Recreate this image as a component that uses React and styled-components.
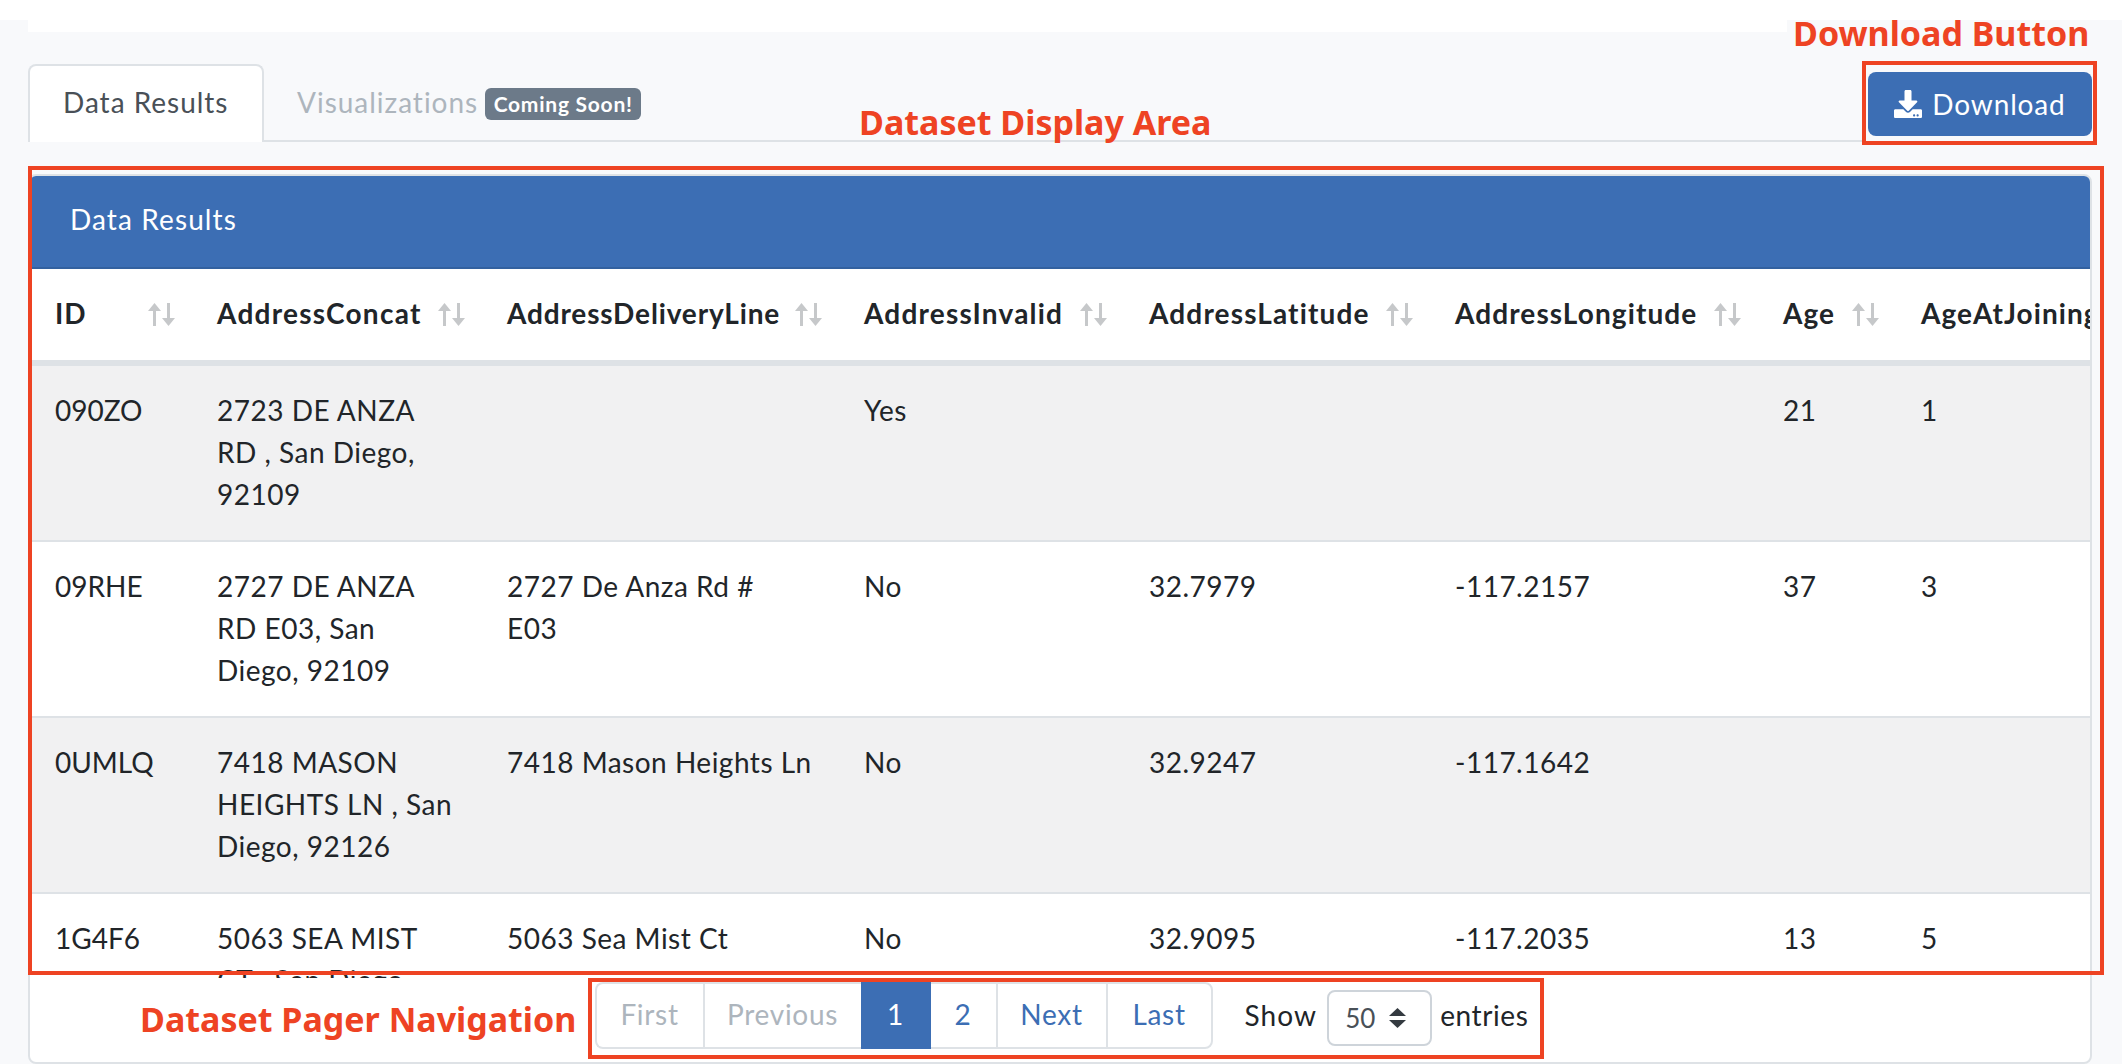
import React from "react";
import styled, { createGlobalStyle } from "styled-components";
import { FaDownload } from "react-icons/fa";

const BLUE = "#3c6eb4";
const RED = "#ee4323";
const LINE = "#dee2e6";

const Global = createGlobalStyle`
  html, body { margin: 0; padding: 0; background: #f8f9fb; }
  * { box-sizing: border-box; }
`;
const Page = styled.div`
  position: relative;
  width: 2122px;
  height: 1064px;
  overflow: hidden;
  background: #f8f9fb;
  color: #212529;
  font-family: "Lato", "Liberation Sans", sans-serif;
  font-size: 28px;
  line-height: 42px;
`;
const TopBand = styled.div`
  display: flex;
  align-items: flex-start;
  height: 32px;
`;
const TopPiece = styled.div`
  flex: ${(p) => (p.$grow ? "1" : `0 0 ${p.$w}px`)};
  height: ${(p) => p.$h}px;
  background: #fff;
`;
const TabRow = styled.div`
  display: flex;
  align-items: flex-end;
  height: 110px;
  padding: 0 30px 0 28px;
`;
const Tabs = styled.div`
  flex: 1;
  display: flex;
  align-items: flex-end;
  height: 78px;
  border-bottom: 2px solid ${LINE};
`;
const Tab = styled.div`
  display: flex;
  align-items: center;
  height: 78px;
  margin-bottom: -2px;
  padding: 0 0 5px ${(p) => (p.$active ? 33 : 31)}px;
  background: ${(p) => (p.$active ? "#fff" : "transparent")};
  border: 2px solid ${(p) => (p.$active ? LINE : "transparent")};
  border-bottom: 0;
  border-radius: 8px 8px 0 0;
  color: ${(p) => (p.$active ? "#495057" : "#adb5bd")};
  letter-spacing: 0.98px;
  white-space: nowrap;
  width: ${(p) => (p.$active ? "236px" : "auto")};
`;
const Badge = styled.span`
  display: inline-flex;
  align-items: center;
  justify-content: center;
  width: 156px;
  height: 32px;
  margin: 5px 0 0 7px;
  background: #6c7a89;
  border-radius: 6px;
  color: #fff;
  font-size: 21px;
  font-weight: 700;
  letter-spacing: 0.75px;
`;
const DownloadButton = styled.button`
  display: flex;
  align-items: center;
  justify-content: center;
  gap: 10px;
  width: 224px;
  height: 64px;
  margin: 0 0 6px 6px;
  padding: 0;
  background: ${BLUE};
  border: 0;
  border-radius: 8px;
  color: #fff;
  font: inherit;
  letter-spacing: 0.85px;
`;
const Card = styled.section`
  display: flex;
  flex-direction: column;
  height: 890px;
  margin: 32px 30px 0 28px;
  background: #fff;
  border: 2px solid ${LINE};
  border-radius: 8px;
  overflow: hidden;
`;
const CardHeader = styled.header`
  display: flex;
  align-items: center;
  flex: 0 0 93px;
  padding: 0 0 5px 40px;
  background: ${BLUE};
  border-bottom: 2px solid #33619f;
  color: #fff;
  letter-spacing: 1.1px;
`;
const TableClip = styled.div`
  flex: 0 0 709px;
  overflow: hidden;
`;
const Table = styled.table`
  width: 2300px;
  table-layout: fixed;
  border-collapse: separate;
  border-spacing: 0;
`;
const Th = styled.th`
  height: 97px;
  padding: 0 19px 3px ${(p) => (p.$first ? 25 : 23)}px;
  border-bottom: 6px solid ${LINE};
  text-align: left;
  font-weight: 700;
  white-space: nowrap;
  letter-spacing: ${(p) => p.$sp}px;
  color: #212529;
`;
const ThInner = styled.div`
  display: flex;
  align-items: center;
  justify-content: space-between;
`;
const SortWrap = styled.span`
  display: flex;
  margin-top: 2px;
`;
const Tr = styled.tr`
  background: ${(p) => (p.$odd ? "#f1f1f2" : "#fff")};
`;
const Td = styled.td`
  height: 176px;
  padding: 23px 0 25px ${(p) => (p.$first ? 25 : 23)}px;
  border-bottom: 2px solid ${LINE};
  vertical-align: top;
  white-space: pre;
  letter-spacing: ${(p) => (p.$first ? 0 : 0.5)}px;
`;
const Footer = styled.footer`
  display: flex;
  justify-content: center;
  align-items: flex-start;
  padding: 4px 0 0 2px;
`;
const Pagination = styled.nav`
  display: flex;
  height: 67px;
  margin-left: 1px;
`;
const PageItem = styled.a`
  display: flex;
  align-items: center;
  justify-content: center;
  width: ${(p) => p.$w}px;
  padding-bottom: 3px;
  border-style: solid;
  border-color: ${(p) => (p.$active ? BLUE : LINE)};
  border-width: 2px ${(p) => (p.$end ? 2 : 0)}px 2px ${(p) => (p.$flush ? 0 : 2)}px;
  border-radius: ${(p) => (p.$first ? "8px 0 0 8px" : p.$end ? "0 8px 8px 0" : "0")};
  background: ${(p) => (p.$active ? BLUE : "#fff")};
  color: ${(p) => (p.$active ? "#fff" : p.$off ? "#adb5bd" : BLUE)};
  letter-spacing: 0.7px;
`;
const Entries = styled.div`
  display: flex;
  align-items: center;
  gap: 8px;
  height: 56px;
  margin: 8px 0 0 32px;
`;
const EntryLabel = styled.span`
  padding-bottom: 7px;
  letter-spacing: ${(p) => p.$sp}px;
`;
const Select = styled.div`
  display: flex;
  align-items: center;
  justify-content: space-between;
  width: 105px;
  height: 56px;
  margin-left: 2px;
  padding: 0 24px 0 16px;
  border: 2px solid #ced4da;
  border-radius: 8px;
  background: #fff;
  color: #495057;
  font-size: 26px;
`;
const Marker = styled.div`
  position: absolute;
  left: ${(p) => p.$x}px;
  top: ${(p) => p.$y}px;
  width: ${(p) => p.$w}px;
  height: ${(p) => p.$h}px;
  border: 4px solid ${RED};
  pointer-events: none;
`;
const Note = styled.div`
  position: absolute;
  left: ${(p) => p.$x}px;
  top: ${(p) => p.$y}px;
  color: ${RED};
  font-family: "Noto Sans", sans-serif;
  font-size: 34px;
  font-weight: 700;
  line-height: 36px;
  white-space: nowrap;
`;

const SortIcon = () => (
  <svg width="27" height="23" viewBox="0 0 27 23" fill="#c6c8ca">
    <path d="M6.5 0 L13 8 H8 V23 H5 V8 H0 Z" />
    <path d="M20.5 23 L14 15 H19 V0 H22 V15 H27 Z" />
  </svg>
);
const Updown = () => (
  <svg width="17" height="20" viewBox="0 0 17 20" fill="#343a40">
    <path d="M8.5 0 L17 8 H0 Z" />
    <path d="M8.5 20 L0 12 H17 Z" />
  </svg>
);

const columns = [
  ["ID", 164, 1.05],
  ["AddressConcat", 290, 1.25],
  ["AddressDeliveryLine", 357, 0.85],
  ["AddressInvalid", 285, 1.2],
  ["AddressLatitude", 306, 1.15],
  ["AddressLongitude", 328, 1.1],
  ["Age", 138, 1.05],
  ["AgeAtJoining", 432, 1.05],
];
const rows = [
  ["090ZO", "2723 DE ANZA\nRD , San Diego,\n92109", "", "Yes", "", "", "21", "1"],
  ["09RHE", "2727 DE ANZA\nRD E03, San\nDiego, 92109", "2727 De Anza Rd #\nE03", "No", "32.7979", "-117.2157", "37", "3"],
  ["0UMLQ", "7418 MASON\nHEIGHTS LN , San\nDiego, 92126", "7418 Mason Heights Ln", "No", "32.9247", "-117.1642", "", ""],
  ["1G4F6", "5063 SEA MIST\nCT , San Diego,\n92121", "5063 Sea Mist Ct", "No", "32.9095", "-117.2035", "13", "5"],
];

export default function App() {
  return (
    <Page>
      <Global />
      <TopBand>
        <TopPiece $w={28} $h={20} />
        <TopPiece $grow $h={32} />
        <TopPiece $w={335} $h={20} />
      </TopBand>
      <TabRow>
        <Tabs>
          <Tab $active>Data Results</Tab>
          <Tab>
            Visualizations
            <Badge>Coming Soon!</Badge>
          </Tab>
        </Tabs>
        <DownloadButton>
          <FaDownload size={28} />
          Download
        </DownloadButton>
      </TabRow>
      <Card>
        <CardHeader>Data Results</CardHeader>
        <TableClip>
          <Table>
            <colgroup>
              {columns.map(([name, w]) => (
                <col key={name} style={{ width: w }} />
              ))}
            </colgroup>
            <thead>
              <tr>
                {columns.map(([name, , sp], i) => (
                  <Th key={name} $first={i === 0} $sp={sp}>
                    {i === 7 ? (
                      name
                    ) : (
                      <ThInner>
                        {name}
                        <SortWrap>
                          <SortIcon />
                        </SortWrap>
                      </ThInner>
                    )}
                  </Th>
                ))}
              </tr>
            </thead>
            <tbody>
              {rows.map((row, r) => (
                <Tr key={row[0]} $odd={r % 2 === 0}>
                  {row.map((cell, i) => (
                    <Td key={i} $first={i === 0}>
                      {cell}
                    </Td>
                  ))}
                </Tr>
              ))}
            </tbody>
          </Table>
        </TableClip>
        <Footer>
          <Pagination>
            <PageItem $first $off $w={108}>First</PageItem>
            <PageItem $off $w={158}>Previous</PageItem>
            <PageItem $active $flush $w={70}>1</PageItem>
            <PageItem $flush $w={65}>2</PageItem>
            <PageItem $w={110}>Next</PageItem>
            <PageItem $end $w={107}>Last</PageItem>
          </Pagination>
          <Entries>
            <EntryLabel $sp={1.1}>Show</EntryLabel>
            <Select>
              50
              <Updown />
            </Select>
            <EntryLabel $sp={0.6}>entries</EntryLabel>
          </Entries>
        </Footer>
      </Card>
      <Note $x={1793} $y={15}>Download Button</Note>
      <Note $x={859} $y={104}>Dataset Display Area</Note>
      <Note $x={140} $y={1001}>Dataset Pager Navigation</Note>
      <Marker $x={1862} $y={61} $w={235} $h={84} />
      <Marker $x={28} $y={166} $w={2076} $h={809} />
      <Marker $x={588} $y={978} $w={956} $h={81} />
    </Page>
  );
}
